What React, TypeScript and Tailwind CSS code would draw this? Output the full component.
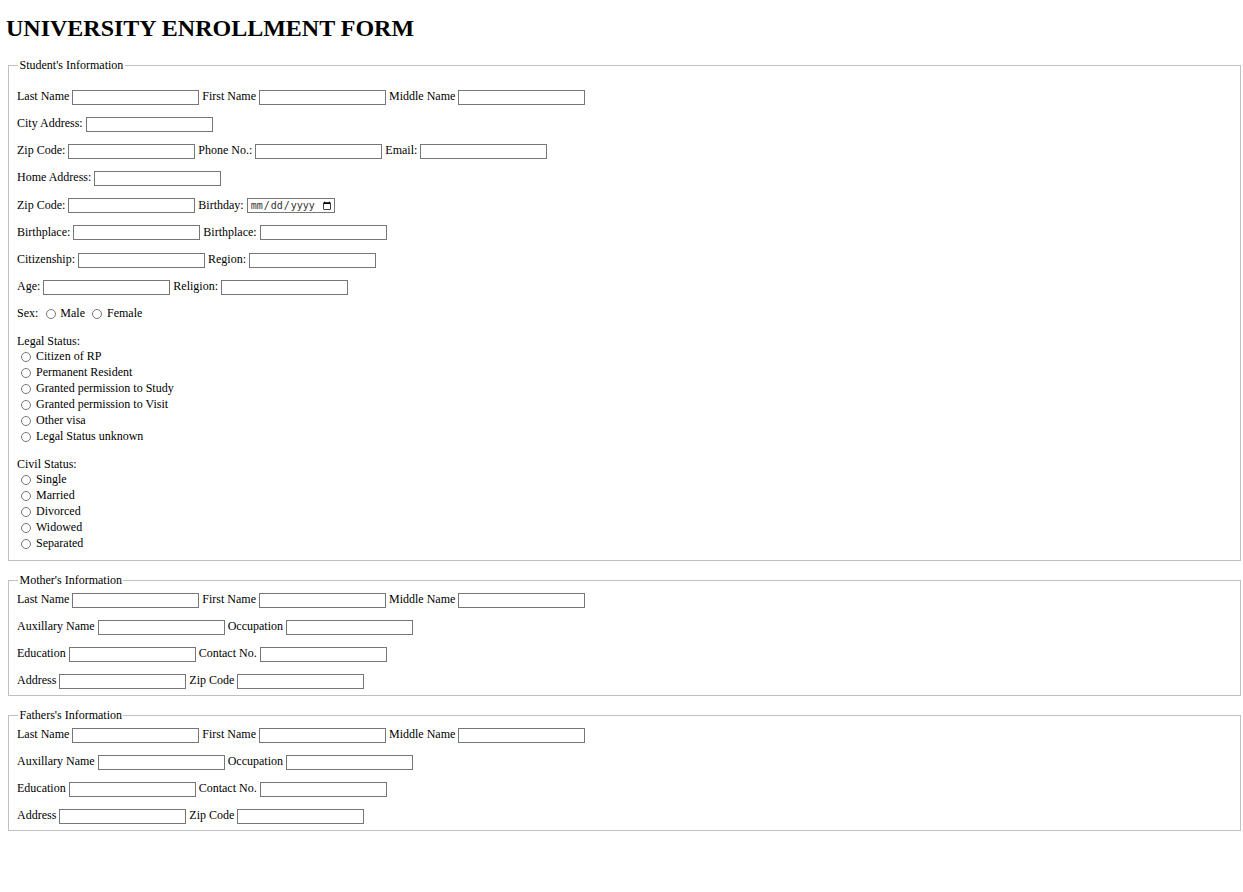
import React from 'react'

const inputCls = 'inline-block align-middle w-[127px] h-[15px] border border-[#767676] bg-white'
const rowCls = 'h-[16px] leading-[16px] whitespace-nowrap'

function Field({ label, first }: { label: string; first?: boolean }) {
  return (
    <>
      {!first && ' '}
      {label} <input type="text" className={inputCls} />
    </>
  )
}

function Radio({ name, label }: { name: string; label: string }) {
  return (
    <div className="flex items-center h-[16px]">
      <input type="radio" name={name} className="w-[10px] h-[10px] ml-[4px] mr-[5px] mt-[1px]" />
      <span>{label}</span>
    </div>
  )
}

const LEGAL = [
  'Citizen of RP',
  'Permanent Resident',
  'Granted permission to Study',
  'Granted permission to Visit',
  'Other visa',
  'Legal Status unknown',
]

const CIVIL = ['Single', 'Married', 'Divorced', 'Widowed', 'Separated']

function ParentInfo({ title }: { title: string }) {
  return (
    <fieldset className="ml-[2px] mr-[2px] mt-[12px] border border-[#c0c0c0] pl-[8px] pr-[9px] pb-[7px]">
      <legend className="ml-[1px] px-[1.5px] leading-[14px]">{title}</legend>
      <div className="flex flex-col gap-[11px] pt-[4px]">
        <div className={rowCls}>
          <Field label="Last Name" first />
          <Field label="First Name" />
          <Field label="Middle Name" />
        </div>
        <div className={rowCls}>
          <Field label="Auxillary Name" first />
          <Field label="Occupation" />
        </div>
        <div className={rowCls}>
          <Field label="Education" first />
          <Field label="Contact No." />
        </div>
        <div className={rowCls}>
          <Field label="Address" first />
          <Field label="Zip Code" />
        </div>
      </div>
    </fieldset>
  )
}

export default function App() {
  return (
    <div className="min-h-screen bg-white text-black font-['Liberation_Serif',_'Times_New_Roman',_serif] text-[12px] pl-[6px] pb-[40px]">
      <h1 className="pt-[14px] mb-[16px] text-[24px] leading-[28px] font-bold">
        UNIVERSITY ENROLLMENT FORM
      </h1>

      <fieldset className="ml-[2px] mr-[2px] border border-[#c0c0c0] pl-[8px] pr-[9px] pb-[9px]">
        <legend className="ml-[1px] px-[1.5px] leading-[14px]">Student's Information</legend>
        <div className="pt-[16px]">
          <div className="flex flex-col gap-[11.125px]">
            <div className={rowCls}>
              <Field label="Last Name" first />
              <Field label="First Name" />
              <Field label="Middle Name" />
            </div>
            <div className={rowCls}>
              <Field label="City Address:" first />
            </div>
            <div className={rowCls}>
              <Field label="Zip Code:" first />
              <Field label="Phone No.:" />
              <Field label="Email:" />
            </div>
            <div className={rowCls}>
              <Field label="Home Address:" first />
            </div>
            <div className={rowCls}>
              <Field label="Zip Code:" first /> Birthday:{' '}
              <input
                type="date"
                className="inline-block align-middle w-[88px] h-[15px] border border-[#767676] bg-white pl-[2px] text-[10px] leading-[13px] font-['DejaVu_Sans_Mono',_monospace] text-[#333]"
              />
            </div>
            <div className={rowCls}>
              <Field label="Birthplace:" first />
              <Field label="Birthplace:" />
            </div>
            <div className={rowCls}>
              <Field label="Citizenship:" first />
              <Field label="Region:" />
            </div>
            <div className={rowCls}>
              <Field label="Age:" first />
              <Field label="Religion:" />
            </div>
            <div className="flex items-center h-[16px]">
              <span>Sex:</span>
              <input type="radio" name="sex" className="w-[10px] h-[10px] ml-[8px] mr-[4px] mt-[1px]" />
              <span>Male</span>
              <input type="radio" name="sex" className="w-[10px] h-[10px] ml-[7px] mr-[5px] mt-[1px]" />
              <span>Female</span>
            </div>
          </div>

          <div className="mt-[13px]">
            <div className="h-[14px] leading-[14px]">Legal Status:</div>
            {LEGAL.map((l) => (
              <Radio key={l} name="legal" label={l} />
            ))}
          </div>

          <div className="mt-[13px]">
            <div className="h-[14px] leading-[14px]">Civil Status:</div>
            {CIVIL.map((c) => (
              <Radio key={c} name="civil" label={c} />
            ))}
          </div>
        </div>
      </fieldset>

      <ParentInfo title="Mother's Information" />
      <ParentInfo title="Fathers's Information" />
    </div>
  )
}
